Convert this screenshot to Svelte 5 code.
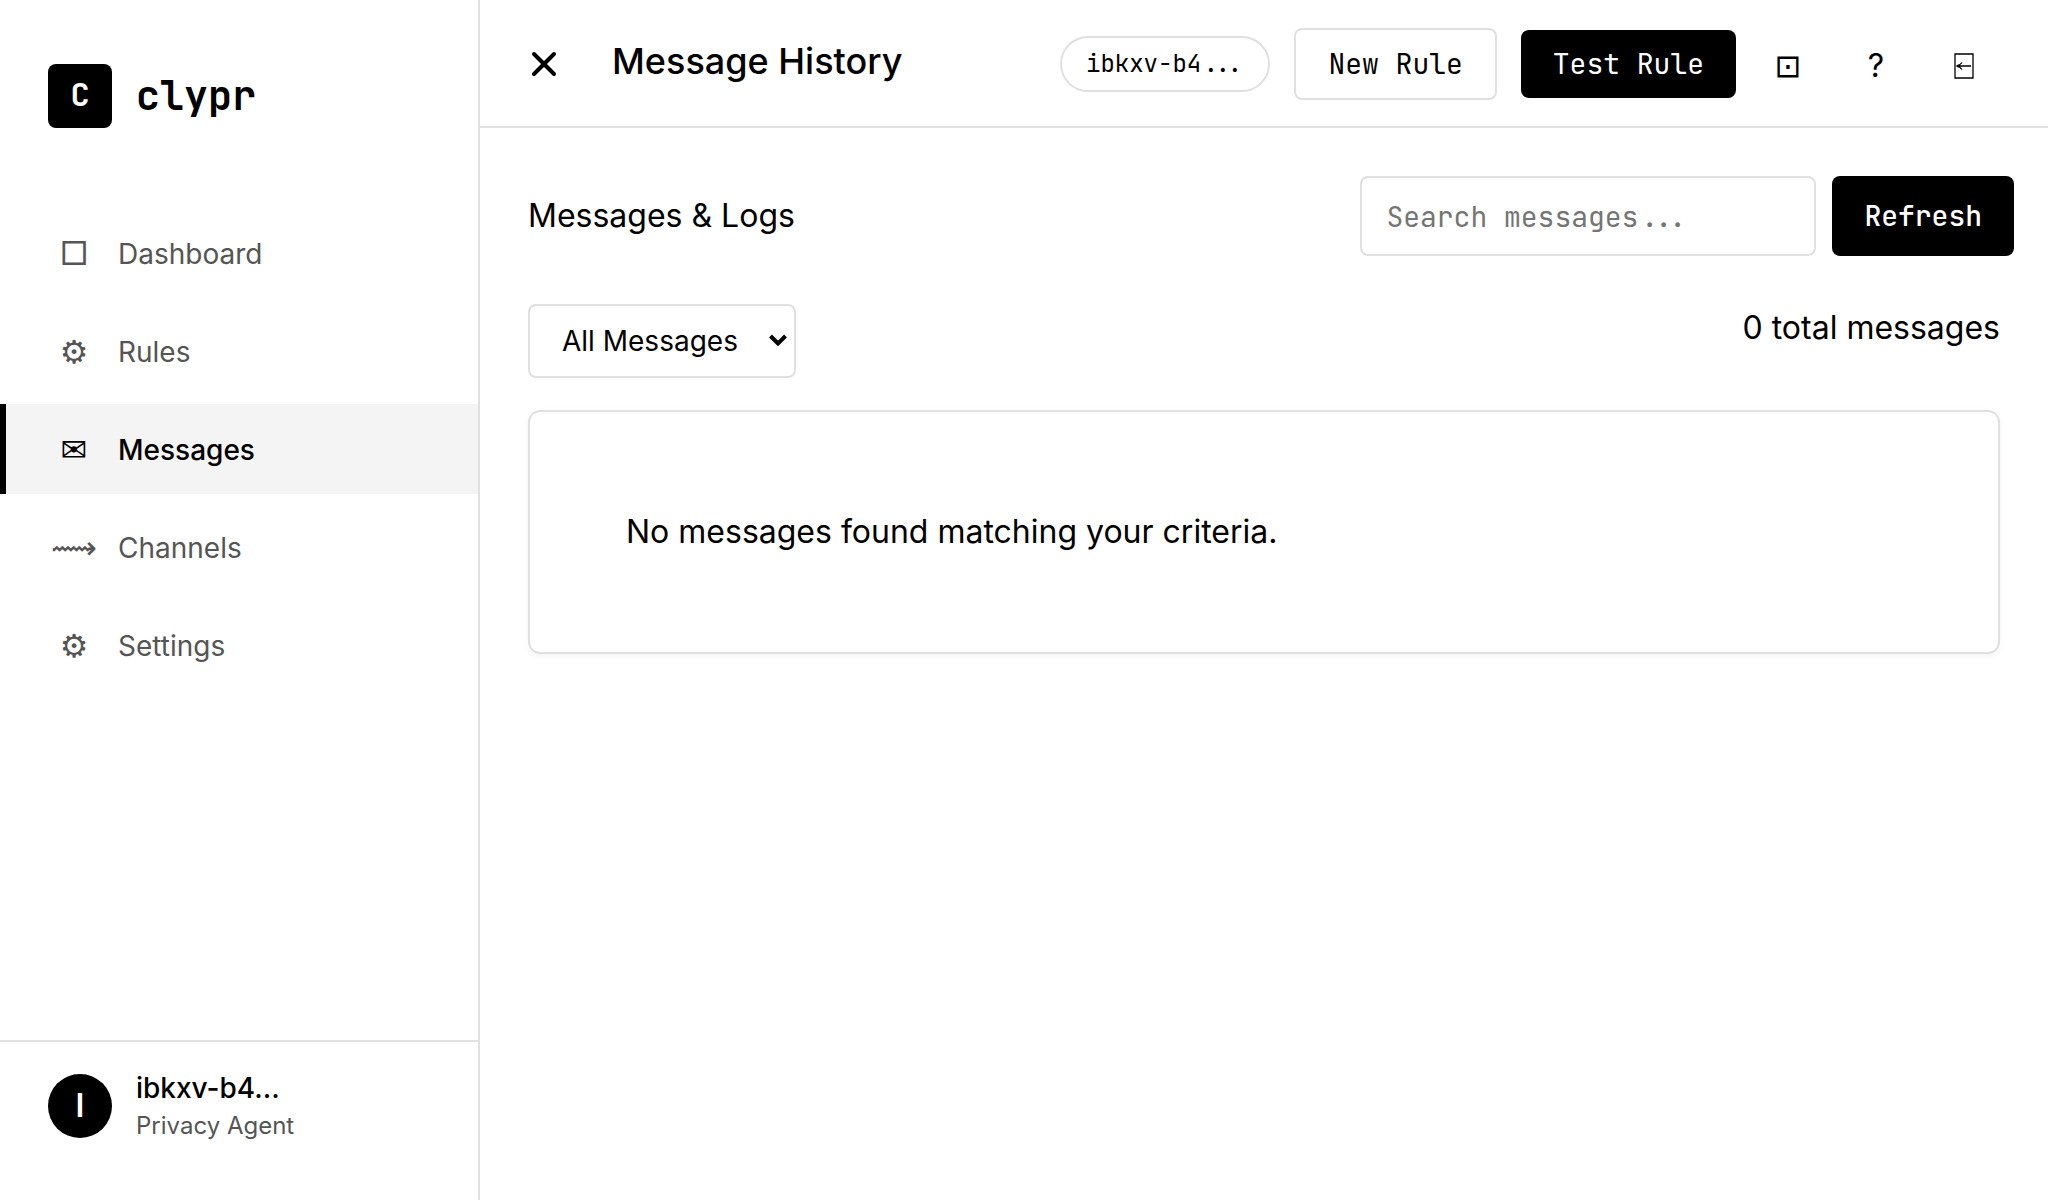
<script>
  const navItems = [
    { icon: '□', label: 'Dashboard' },
    { icon: '⚙', label: 'Rules' },
    { icon: '✉', label: 'Messages' },
    { icon: '⟿', label: 'Channels' },
    { icon: '⚙', label: 'Settings' }
  ];
  let active = $state('Messages');
  let query = $state('');
  let filter = $state('all');
</script>

<div class="app">
  <aside class="sidebar">
    <div class="brand">
      <span class="logo">C</span>
      <span class="brand-name">clypr</span>
    </div>
    <nav class="nav" aria-label="Main">
      {#each navItems as item}
        <a
          href="#{item.label.toLowerCase()}"
          class="nav-item"
          class:active={active === item.label}
          onclick={() => (active = item.label)}
        >
          <span class="nav-icon" aria-hidden="true">{item.icon}</span>
          <span>{item.label}</span>
        </a>
      {/each}
    </nav>
    <footer class="user">
      <span class="avatar">I</span>
      <div class="user-info">
        <span class="user-name">ibkxv-b4...</span>
        <span class="user-role">Privacy Agent</span>
      </div>
    </footer>
  </aside>

  <div class="main">
    <header class="topbar">
      <button class="close" type="button" aria-label="Close menu">
        <svg viewBox="0 0 26 26" width="26" height="26" aria-hidden="true">
          <path d="M3 3 L23 23 M23 3 L3 23" />
        </svg>
      </button>
      <h1>Message History</h1>
      <div class="actions">
        <span class="pill">ibkxv-b4...</span>
        <button class="btn outline" type="button">New Rule</button>
        <button class="btn solid" type="button">Test Rule</button>
      </div>
      <div class="tools">
        <button class="tool" type="button" aria-label="Toggle view">⊡</button>
        <button class="tool" type="button" aria-label="Help">?</button>
        <button class="tool" type="button" aria-label="Log out">
          <svg viewBox="0 0 20 26" width="20" height="26" aria-hidden="true">
            <path d="M1 1 H19 V25 H1 Z M17 13 H3 M8 9.5 Q6 12.5 2.5 13 Q6 13.5 8 16.5" />
          </svg>
        </button>
      </div>
    </header>

    <main class="content">
      <div class="heading-row">
        <h2>Messages &amp; Logs</h2>
        <div class="search">
          <input type="text" placeholder="Search messages..." aria-label="Search messages" bind:value={query} />
          <button class="btn solid refresh" type="button">Refresh</button>
        </div>
      </div>
      <div class="filter-row">
        <div class="select-wrap">
          <select aria-label="Filter messages" bind:value={filter}>
            <option value="all">All Messages</option>
          </select>
          <svg class="chevron" viewBox="0 0 18 12" width="18" height="12" aria-hidden="true">
            <path d="M1.5 2 L9 9.5 L16.5 2" />
          </svg>
        </div>
        <span class="total">0 total messages</span>
      </div>
      <section class="card">
        <p>No messages found matching your criteria.</p>
      </section>
    </main>
  </div>
</div>

<style>
  :global(body) {
    margin: 0;
    background: #fff;
  }

  .app {
    --line: #e0e0e0;
    --mono: 'JetBrains Mono', 'DejaVu Sans Mono', monospace;
    display: flex;
    min-height: 100vh;
    font-family: Inter, 'DejaVu Sans', sans-serif;
    font-size: 32px;
    line-height: 48px;
    color: #000;
  }

  .app :global(*) {
    box-sizing: border-box;
  }

  button,
  input,
  select {
    margin: 0;
    font: inherit;
    color: inherit;
  }

  h1,
  h2,
  p {
    margin: 0;
    font-weight: 400;
    font-size: 32px;
  }

  .sidebar {
    display: flex;
    flex-direction: column;
    flex: 0 0 480px;
    border-right: 2px solid var(--line);
  }

  .brand {
    display: flex;
    align-items: center;
    gap: 24px;
    padding: 64px 48px 80px;
    font-family: var(--mono);
    font-weight: 700;
  }

  .logo,
  .avatar {
    display: flex;
    align-items: center;
    justify-content: center;
    flex: none;
    width: 64px;
    height: 64px;
    background: #000;
    color: #fff;
  }

  .logo {
    padding-bottom: 2px;
    border-radius: 8px;
  }

  .brand-name {
    font-size: 40px;
  }

  .nav {
    display: flex;
    flex-direction: column;
    gap: 8px;
  }

  .nav-item {
    display: flex;
    align-items: center;
    gap: 24px;
    height: 90px;
    padding: 2px 48px 0;
    border-left: 6px solid transparent;
    color: #555;
    font-size: 28px;
    text-decoration: none;
  }

  .nav-item.active {
    border-left-color: #000;
    background: #f4f4f4;
    color: #000;
    font-weight: 500;
  }

  .nav-icon {
    display: flex;
    justify-content: center;
    width: 40px;
    font-size: 32px;
    font-weight: 400;
  }

  .user {
    display: flex;
    align-items: flex-start;
    gap: 24px;
    margin-top: auto;
    padding: 32px 48px 62px;
    border-top: 2px solid var(--line);
  }

  .avatar {
    border-radius: 50%;
    font-weight: 600;
  }

  .user-info {
    display: flex;
    flex-direction: column;
    height: 64px;
  }

  .user-name {
    font-size: 28px;
    font-weight: 500;
    line-height: 28px;
  }

  .user-role {
    font-size: 24px;
    color: #555;
  }

  .main {
    flex: 1;
    min-width: 0;
  }

  .topbar {
    display: flex;
    align-items: center;
    height: 128px;
    padding: 2px 48px 0;
    border-bottom: 2px solid var(--line);
  }

  .close {
    display: flex;
    align-items: center;
    width: 84px;
    height: 64px;
    padding: 0 3px;
    border: 0;
    background: none;
  }

  .close path {
    fill: none;
    stroke: #000;
    stroke-width: 4;
    stroke-linecap: round;
  }

  h1 {
    padding-bottom: 6px;
    font-size: 36px;
    font-weight: 500;
  }

  .actions {
    display: flex;
    align-items: center;
    gap: 24px;
    margin-left: auto;
    margin-right: 16px;
  }

  .pill {
    padding: 8px 24px;
    border: 2px solid var(--line);
    border-radius: 28px;
    font-family: var(--mono);
    font-size: 24px;
    line-height: 36px;
  }

  .btn {
    padding: 16px 32px;
    border: 0;
    border-radius: 8px;
    background: #fff;
    font-family: var(--mono);
    font-size: 28px;
    line-height: 36px;
    white-space: nowrap;
  }

  .outline {
    border: 2px solid var(--line);
  }

  .solid {
    background: #000;
    color: #fff;
  }

  .tools {
    display: flex;
    gap: 16px;
  }

  .tool {
    display: flex;
    align-items: center;
    justify-content: center;
    width: 72px;
    height: 72px;
    padding: 4px 0 0;
    border: 0;
    background: none;
  }

  .tool path {
    fill: none;
    stroke: #000;
    stroke-width: 1.3;
  }

  .content {
    padding: 48px;
  }

  .heading-row {
    display: flex;
    align-items: center;
    justify-content: space-between;
    margin-right: -14px;
  }

  .search {
    display: flex;
    gap: 16px;
  }

  input {
    width: 456px;
    height: 80px;
    padding: 0 24px;
    border: 2px solid var(--line);
    border-radius: 8px;
    background: #fff;
    font-family: var(--mono);
    font-size: 28px;
  }

  input::placeholder {
    color: #757575;
    opacity: 1;
  }

  .refresh {
    font-weight: 500;
  }

  .filter-row {
    display: flex;
    align-items: flex-start;
    justify-content: space-between;
    margin: 48px 0 32px;
  }

  .select-wrap {
    position: relative;
  }

  select {
    display: block;
    width: 268px;
    height: 74px;
    padding: 0 32px;
    border: 2px solid var(--line);
    border-radius: 8px;
    background: #fff;
    font-size: 28px;
    appearance: none;
  }

  .chevron {
    position: absolute;
    top: 30px;
    right: 9px;
    pointer-events: none;
  }

  .chevron path {
    fill: none;
    stroke: #000;
    stroke-width: 4;
  }

  .card {
    padding: 96px;
    border: 2px solid var(--line);
    border-radius: 12px;
    box-shadow: 0 2px 6px rgba(0, 0, 0, 0.05);
  }
</style>
